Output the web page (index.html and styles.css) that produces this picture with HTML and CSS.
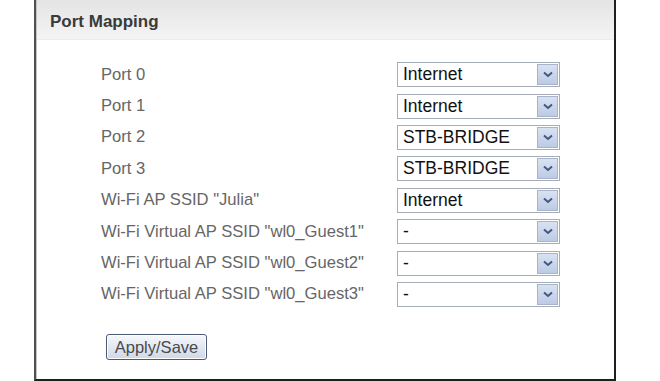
FILE: index.html
```html
<!DOCTYPE html>
<html>
<head>
<meta charset="utf-8">
<title>Port Mapping</title>
<link rel="stylesheet" href="styles.css">
</head>
<body>
<div class="panel">
  <div class="header">Port Mapping</div>
  <div class="content">
    <div class="grid">
      <div class="label">Port 0</div>
      <div class="select"><span class="val">Internet</span><span class="arrow"><svg width="10" height="7" viewBox="0 0 10 7"><path d="M1 1.5 L5 5 L9 1.5" fill="none" stroke="#44587e" stroke-width="2"/></svg></span></div>
      <div class="label">Port 1</div>
      <div class="select"><span class="val">Internet</span><span class="arrow"><svg width="10" height="7" viewBox="0 0 10 7"><path d="M1 1.5 L5 5 L9 1.5" fill="none" stroke="#44587e" stroke-width="2"/></svg></span></div>
      <div class="label">Port 2</div>
      <div class="select"><span class="val">STB-BRIDGE</span><span class="arrow"><svg width="10" height="7" viewBox="0 0 10 7"><path d="M1 1.5 L5 5 L9 1.5" fill="none" stroke="#44587e" stroke-width="2"/></svg></span></div>
      <div class="label">Port 3</div>
      <div class="select"><span class="val">STB-BRIDGE</span><span class="arrow"><svg width="10" height="7" viewBox="0 0 10 7"><path d="M1 1.5 L5 5 L9 1.5" fill="none" stroke="#44587e" stroke-width="2"/></svg></span></div>
      <div class="label">Wi-Fi AP SSID "Julia"</div>
      <div class="select"><span class="val">Internet</span><span class="arrow"><svg width="10" height="7" viewBox="0 0 10 7"><path d="M1 1.5 L5 5 L9 1.5" fill="none" stroke="#44587e" stroke-width="2"/></svg></span></div>
      <div class="label">Wi-Fi Virtual AP SSID "wl0_Guest1"</div>
      <div class="select"><span class="val">-</span><span class="arrow"><svg width="10" height="7" viewBox="0 0 10 7"><path d="M1 1.5 L5 5 L9 1.5" fill="none" stroke="#44587e" stroke-width="2"/></svg></span></div>
      <div class="label">Wi-Fi Virtual AP SSID "wl0_Guest2"</div>
      <div class="select"><span class="val">-</span><span class="arrow"><svg width="10" height="7" viewBox="0 0 10 7"><path d="M1 1.5 L5 5 L9 1.5" fill="none" stroke="#44587e" stroke-width="2"/></svg></span></div>
      <div class="label">Wi-Fi Virtual AP SSID "wl0_Guest3"</div>
      <div class="select"><span class="val">-</span><span class="arrow"><svg width="10" height="7" viewBox="0 0 10 7"><path d="M1 1.5 L5 5 L9 1.5" fill="none" stroke="#44587e" stroke-width="2"/></svg></span></div>
    </div>
    <button class="btn" type="button">Apply/Save</button>
  </div>
</div>
</body>
</html>
```

FILE: styles.css
```css
html, body {
  margin: 0;
  padding: 0;
  background: #ffffff;
}

body {
  font-family: "Liberation Sans", Arial, sans-serif;
  width: 660px;
  height: 381px;
  overflow: hidden;
}

.panel {
  box-sizing: border-box;
  margin-left: 34px;
  width: 582px;
  height: 381px;
  border-left: 2px solid #505050;
  border-right: 2px solid #1e1e1e;
  border-bottom: 2px solid #1e1e1e;
  box-shadow: inset 1px 0 0 #c4c4c4;
  background: #ffffff;
}

.header {
  height: 40px;
  box-sizing: border-box;
  padding-left: 13px;
  line-height: 44px;
  font-size: 17px;
  font-weight: bold;
  color: #3a3a3a;
  background: linear-gradient(#e4e4e4, #f4f4f4);
  border-bottom: 1px solid #ececec;
  margin-left: 1px;
}

.content {
  padding: 19px 0 0 65px;
}

.grid {
  display: grid;
  grid-template-columns: 296px 163px;
  grid-auto-rows: 31.4px;
  align-items: center;
}

.label {
  font-size: 16.6px;
  color: #666666;
  white-space: nowrap;
}

.select {
  box-sizing: border-box;
  height: 25px;
  display: flex;
  align-items: stretch;
  border: 1px solid #a7adb6;
  background: #ffffff;
  padding: 1px;
}

.val {
  flex: 1;
  font-size: 17.5px;
  line-height: 21px;
  color: #111111;
  padding-left: 4px;
}

.arrow {
  width: 21px;
  box-sizing: border-box;
  border: 1px solid #a9b4c8;
  background: linear-gradient(#d8e2f2, #bccbe4);
  display: flex;
  align-items: center;
  justify-content: center;
}

.arrow svg {
  display: block;
}

.btn {
  margin: 24px 0 0 5px;
  width: 101px;
  height: 26px;
  font-family: "Liberation Sans", Arial, sans-serif;
  font-size: 16.5px;
  color: #4a4a4a;
  border: 1px solid #4b5a72;
  border-radius: 3px;
  background: linear-gradient(#f6f8fb, #cfd8e7);
  padding: 0;
  box-shadow: inset 0 0 0 1px #ffffff;
}
```
